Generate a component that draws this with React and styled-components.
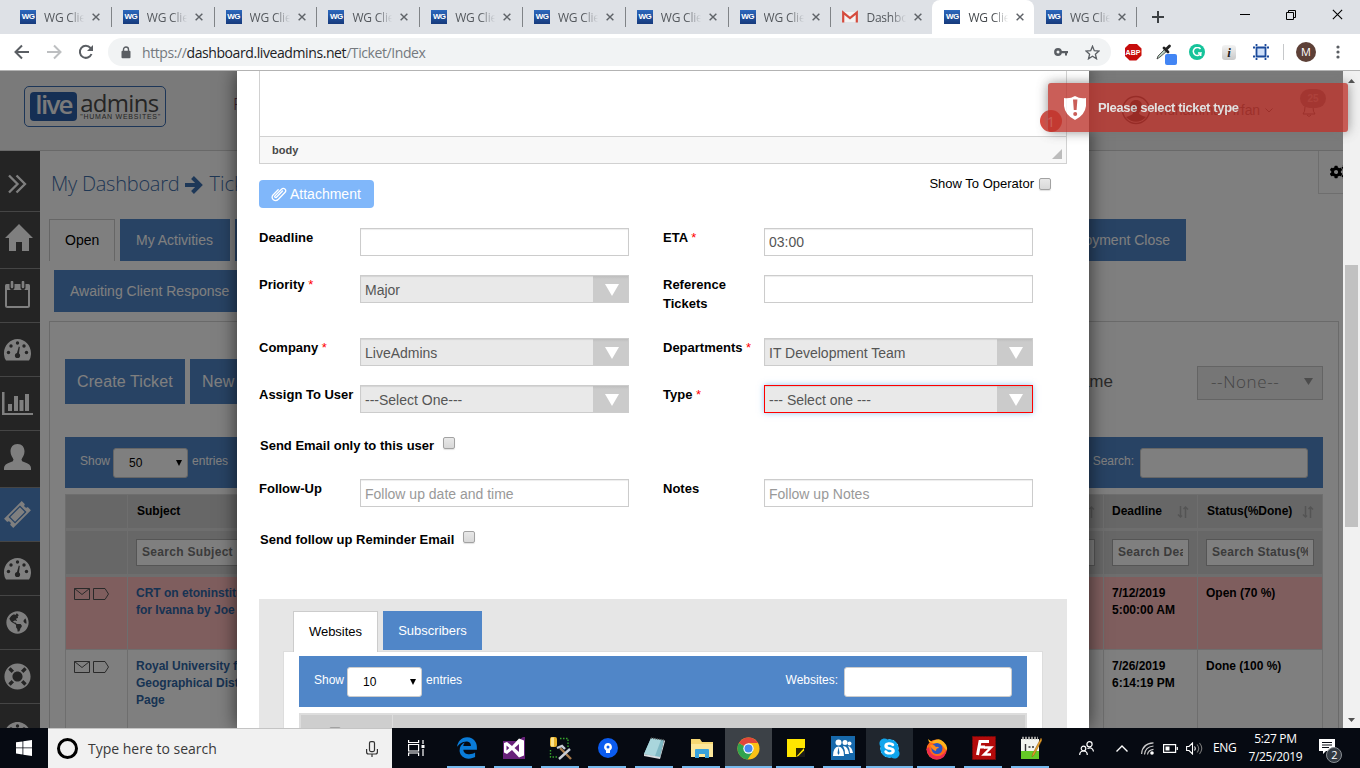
import React from "react";
import styled, { createGlobalStyle, css } from "styled-components";
import {
  FaCogs,
  FaGlobeAmericas,
  FaLifeRing,
  FaSkype,
} from "react-icons/fa";

const ui = `"Open Sans", "Noto Sans", sans-serif`;
const arial = `"Liberation Sans", Arial, sans-serif`;

const Global = createGlobalStyle`
  * { box-sizing: border-box; }
  html, body { margin: 0; padding: 0; overflow: hidden; }
  body { width: 1360px; height: 768px; font-family: ${arial}; color: #000; }
  svg { display: block; flex: none; }
`;

const Screen = styled.div`
  width: 1360px;
  height: 768px;
  display: flex;
  flex-direction: column;
  overflow: hidden;
`;

const Txt = styled.span`
  white-space: nowrap;
  letter-spacing: ${(p) => p.$ls || 0}px;
`;

/* ---------- browser chrome ---------- */

const TabStrip = styled.div`
  flex: none;
  height: 34px;
  background: #dee1e6;
  display: flex;
  padding-left: 8px;
`;

const BrowserTab = styled.div`
  width: ${(p) => (p.$active ? 101.6 : p.$w || 102.8)}px;
  height: 34px;
  display: flex;
  align-items: center;
  padding: 0 0 0 12px;
  font: 12px ${ui};
  color: #54585d;
  position: relative;
  ${(p) =>
    p.$active &&
    css`
      background: #fff;
      border-radius: 8px 8px 0 0;
      color: #45494d;
    `}
  ${(p) =>
    p.$line &&
    css`
      &::after {
        content: "";
        position: absolute;
        right: -1px;
        top: 7px;
        width: 1px;
        height: 20px;
        background: #808387;
      }
    `}
`;

const TabLabel = styled.span`
  width: 41px;
  margin-left: 8px;
  overflow: hidden;
  white-space: nowrap;
  letter-spacing: -0.2px;
  mask-image: linear-gradient(90deg, #000 60%, transparent 98%);
`;

const WgBadge = styled.span`
  width: 16px;
  height: 14px;
  background: linear-gradient(#2c68bd, #163a7c);
  color: #fff;
  font: bold 8px/13px ${arial};
  letter-spacing: -0.6px;
  text-align: center;
  flex: none;
`;

const TabClose = styled.span`
  margin-left: 7px;
  display: flex;
`;

const NewTab = styled.div`
  width: 44px;
  display: grid;
  place-items: center;
`;

const WindowButtons = styled.div`
  margin-left: auto;
  display: flex;
  height: 29px;
`;

const WindowButton = styled.div`
  width: 46px;
  display: grid;
  place-items: center;
`;

const Toolbar = styled.div`
  flex: none;
  height: 37px;
  background: #fff;
  border-bottom: 1px solid #b3b3b3;
  display: flex;
  align-items: center;
  padding-left: 14px;
`;

const NavButtons = styled.div`
  display: flex;
  gap: 16px;
  width: 94px;
`;

const AddressBar = styled.div`
  width: 1003px;
  height: 28px;
  border-radius: 14px;
  background: #f1f3f4;
  display: flex;
  align-items: center;
  padding: 0 11px 0 13px;
  font: 14px ${ui};
  color: #74797e;
`;

const Url = styled.span`
  margin-left: 11px;
  flex: 1;
  letter-spacing: -0.41px;
  b {
    font-weight: 400;
    color: #202124;
  }
`;

const AddressIcons = styled.div`
  display: flex;
  align-items: center;
  gap: 17px;
`;

const Extensions = styled.div`
  display: flex;
  align-items: center;
  margin-left: 6px;
`;

const ExtSlot = styled.div`
  width: 32px;
  height: 28px;
  display: grid;
  place-items: center;
`;

const AbpBadge = styled.div`
  width: 17px;
  height: 17px;
  background: #c70d0c;
  clip-path: polygon(30% 0, 70% 0, 100% 30%, 100% 70%, 70% 100%, 30% 100%, 0 70%, 0 30%);
  color: #fff;
  font: bold 7px/17px ${arial};
  text-align: center;
`;

const GrammarBadge = styled.div`
  width: 16px;
  height: 16px;
  border-radius: 50%;
  background: #15c39a;
  display: grid;
  place-items: center;
`;

const InfoBadge = styled.div`
  width: 14px;
  height: 15px;
  border-radius: 3px;
  background: linear-gradient(#f3f3f3, #c9c9c9);
  color: #222;
  font: italic bold 13px/15px "Liberation Serif", serif;
  text-align: center;
`;

const ToolbarDivider = styled.div`
  width: 1px;
  height: 16px;
  background: #c6c8ca;
  margin-left: 6px;
`;

const Profile = styled.div`
  width: 20px;
  height: 20px;
  border-radius: 50%;
  background: #5d4037;
  color: #fff;
  font: 11px/20px ${ui};
  text-align: center;
  margin: 0 20px 0 12px;
`;

/* ---------- page behind the dialog ---------- */

const Viewport = styled.div`
  flex: none;
  height: 657px;
  display: flex;
`;

const PageArea = styled.div`
  width: 1343px;
  position: relative;
`;

const Page = styled.div`
  height: 100%;
  background: #fff;
  display: flex;
  flex-direction: column;
  overflow: hidden;
`;

const SiteHeader = styled.header`
  flex: none;
  height: 80px;
  background: #f4f4f4;
  border-bottom: 1px solid #d2d2d2;
  display: flex;
  padding-left: 24px;
`;

const Logo = styled.div`
  width: 142px;
  height: 41px;
  margin-top: 15px;
  border: 1px solid #3a6cb0;
  border-radius: 5px;
  display: flex;
  padding: 5px 4px 5px 5px;
`;

const LogoLive = styled.div`
  width: 49px;
  height: 29px;
  border-radius: 4px;
  background: #2b5fa8;
  color: #f4f4f4;
  font: 600 26px/25px ${ui};
  letter-spacing: -1.7px;
  text-align: center;
`;

const LogoWords = styled.div`
  margin-left: 3px;
  display: flex;
  flex-direction: column;
  color: #4a4a4a;
  font: 24px/21px ${ui};
  letter-spacing: -0.7px;
  white-space: nowrap;
  small {
    font: 7px/8px ${arial};
    letter-spacing: 0.75px;
  }
`;

const HeaderLink = styled.div`
  margin: 22px 0 0 67px;
  font: 300 17px/22px ${ui};
  color: #7a3a5a;
`;

const HeaderUser = styled.div`
  margin: 24px 0 0 auto;
  height: 30px;
  display: flex;
  align-items: center;
  font-size: 14px;
  color: #333;
  gap: 5px;
`;

const Notices = styled.div`
  width: 36px;
  margin: 18px 13px 0 21px;
  position: relative;
  display: flex;
  justify-content: center;
  svg {
    margin-top: 9px;
    margin-right: 7px;
  }
`;

const NoticeCount = styled.span`
  position: absolute;
  left: 6px;
  top: 0;
  width: 26px;
  height: 19px;
  border-radius: 10px;
  background: #777;
  color: #ddd;
  font: bold 10px/19px ${arial};
  text-align: center;
`;

const PageBody = styled.div`
  flex: 1;
  min-height: 0;
  display: flex;
`;

const Sidebar = styled.nav`
  width: 40px;
  flex: none;
  background: #484848;
  overflow: hidden;
`;

const SideItem = styled.div`
  height: ${(p) => p.$h}px;
  border-bottom: 1px solid #8b8b8b;
  background: ${(p) => (p.$active ? "#5086c8" : "#484848")};
  color: #fff;
  display: flex;
  align-items: center;
  padding: ${(p) => Math.max(0, -p.$up)}px 0 ${(p) => Math.max(0, p.$up)}px ${(p) => p.$x}px;
`;

const Main = styled.main`
  flex: 1;
  min-width: 0;
  display: flex;
  flex-direction: column;
`;

const TitleRow = styled.div`
  height: 68px;
  flex: none;
  display: flex;
  padding-left: 11px;
  font: 300 20px/66px ${ui};
  color: #3f6ea9;
  svg {
    margin: 25px 6px 0 6px;
  }
`;

const Settings = styled.div`
  margin-left: auto;
  width: 25px;
  height: 43px;
  border-left: 1px solid #ddd;
  border-bottom: 1px solid #ddd;
  overflow: hidden;
  color: #000;
  svg {
    margin: 12px 0 0 11px;
  }
`;

const PageTabs = styled.div`
  flex: none;
  display: flex;
  gap: 5px;
  height: 42px;
  margin-top: ${(p) => p.$mt || 0}px;
  padding: 0 157px 0 ${(p) => p.$pl}px;
`;

const PageTab = styled.div`
  background: #5086c8;
  color: #fff;
  font-size: 14px;
  line-height: 42px;
  width: ${(p) => p.$w || "auto"};
  flex: ${(p) => (p.$fill ? 1 : "none")};
  padding: 0 16px;
  white-space: nowrap;
  ${(p) =>
    p.$active &&
    css`
      background: #fff;
      color: #000;
      border: 1px solid #ccc;
      border-bottom: 0;
      padding: 0 15px;
      line-height: 40px;
    `}
`;

const Panel = styled.section`
  flex: 1;
  width: 1290px;
  margin: 9px 0 0 9px;
  border: 1px solid #d4d4d4;
  border-bottom: 0;
  padding: 37px 15px 0;
`;

const Actions = styled.div`
  display: flex;
  height: 45px;
  gap: 5px;
  margin-bottom: 33px;
`;

const ActionButton = styled.div`
  width: ${(p) => p.$w}px;
  background: #5086c8;
  color: #fff;
  font-size: 16px;
  letter-spacing: 0.12px;
  line-height: 45px;
  padding-left: 12px;
  white-space: nowrap;
`;

const FilterLabel = styled.div`
  margin-left: auto;
  font-size: 17px;
  line-height: 45px;
  color: #555;
  width: 129px;
  text-align: right;
  padding-right: 0;
`;

const NoneSelect = styled.div`
  width: 126px;
  height: 34px;
  margin: 7px 0 0 79px;
  border: 1px solid #c8c8c8;
  background: #ececec;
  color: #8a8a8a;
  font: 300 17px/30px ${ui};
  display: flex;
  justify-content: space-between;
  padding: 0 9px 0 13px;
  svg {
    margin-top: 11px;
  }
`;

const ListBar = styled.div`
  height: 51px;
  background: #5086c8;
  color: #fff;
  font: 12px ${arial};
  display: flex;
  align-items: center;
  padding: 0 15px;
`;

const BarText = styled.span`
  padding-bottom: 3px;
  margin-left: ${(p) => (p.$push ? "auto" : 0)};
`;

const CountSelect = styled.div`
  width: 75px;
  height: 30px;
  border: 1px solid #ccc;
  border-radius: 3px;
  background: #fff;
  color: #000;
  font: 12px/30px ${arial};
  display: flex;
  align-items: center;
  justify-content: space-between;
  padding: 0 5px 0 15px;
  margin: 0 4px 0 ${(p) => p.$ml}px;
`;

const BarSearch = styled.input`
  width: 168px;
  height: 30px;
  border: 1px solid #ccc;
  border-radius: 3px;
  background: #fff;
  margin-left: 6px;
  outline: 0;
  padding: 0 6px;
`;

const Grid = styled.div`
  margin-top: 6px;
  border: 1px solid #ddd;
  border-bottom: 0;
`;

const GridRow = styled.div`
  display: grid;
  grid-template-columns: 62px 1fr 110px 94px 124px;
  height: ${(p) => p.$h}px;
  background: ${(p) => p.$bg || "#fff"};
  border-bottom: ${(p) => p.$bb || 1}px solid #ddd;
`;

const Cell = styled.div`
  border-right: 1px solid #ddd;
  &:last-child {
    border-right: 0;
  }
  padding: ${(p) => p.$p || "8px 8px 6px"};
  font: bold 12px/17px ${arial};
  color: ${(p) => p.$color || "#000"};
  white-space: nowrap;
  overflow: hidden;
  display: ${(p) => (p.$flex ? "flex" : "block")};
  justify-content: space-between;
  align-items: center;
`;

const MailIcons = styled.div`
  display: flex;
  gap: 3px;
  padding-top: 3px;
`;

const CellSearch = styled.div`
  width: ${(p) => p.$w}px;
  height: 27px;
  border: 1px solid #aaa;
  background: #fff;
  padding: 0 5px;
  color: #777;
  font: bold 12px/25px ${arial};
  overflow: hidden;
  white-space: nowrap;
  span {
    display: block;
    overflow: hidden;
    letter-spacing: 0.3px;
  }
`;

const Backdrop = styled.div`
  position: absolute;
  inset: 0;
  background: rgba(0, 0, 0, 0.5);
`;

/* ---------- dialog ---------- */

const DialogLayer = styled.div`
  position: absolute;
  inset: 0;
  overflow: hidden;
  padding-left: 237px;
`;

const Dialog = styled.div`
  width: 852px;
  height: 100%;
  background: #fff;
  box-shadow: 0 0 18px rgba(0, 0, 0, 0.62);
  padding: 0 22px;
  display: flex;
  flex-direction: column;
`;

const Editor = styled.div`
  flex: none;
  height: 93px;
  border: 1px solid #d1d1d1;
  border-top: 0;
  display: flex;
  flex-direction: column;
  justify-content: flex-end;
`;

const EditorPath = styled.div`
  height: 27px;
  border-top: 1px solid #d1d1d1;
  background: #f8f8f8;
  color: #484848;
  font: bold 11px/26px ${arial};
  padding: 0 4px 0 12px;
  display: flex;
  justify-content: space-between;
  svg {
    margin-top: 12px;
  }
`;

const AttachRow = styled.div`
  flex: none;
  height: 64px;
  display: flex;
  justify-content: space-between;
  padding-top: 16px;
`;

const AttachButton = styled.div`
  width: 115px;
  height: 28px;
  border-radius: 4px;
  background: #80b7fa;
  color: #fff;
  font-size: 14px;
  display: flex;
  align-items: center;
  padding-left: 12px;
  gap: 3px;
`;

const CheckLine = styled.label`
  display: flex;
  font: ${(p) => (p.$bold ? "bold" : "normal")} 13px/15px ${arial};
  height: ${(p) => (p.$h ? p.$h + "px" : "auto")};
  padding: ${(p) => p.$p};
  flex: none;
`;

const OperatorText = styled.span`
  margin-top: -4px;
`;

const Check = styled.span`
  display: block;
  width: 12px;
  height: 12px;
  border: 1px solid #a2a2a2;
  border-radius: 2px;
  background: linear-gradient(#e8e8e8, #d8d8d8);
  margin: ${(p) => p.$m};
  box-shadow: 0 1px 1px rgba(0, 0, 0, 0.12);
`;

const FormRow = styled.div`
  flex: none;
  display: flex;
  height: ${(p) => p.$h}px;
`;

const Label = styled.div`
  width: 101px;
  font: bold 13px/19px ${arial};
  white-space: pre-line;
  i {
    color: #f00;
    font-style: normal;
    font-weight: 400;
  }
`;

const Input = styled.input`
  width: 269px;
  height: 28px;
  border: 1px solid #ccc;
  box-shadow: inset 0 1px 1px rgba(0, 0, 0, 0.075);
  font: 14px ${arial};
  color: #555;
  padding: ${(p) => (p.value ? "0 4px 1px" : "1px 4px 0")};
  margin-right: 34px;
  outline: 0;
  &::placeholder {
    color: #999;
    opacity: 1;
  }
`;

const Select = styled.div`
  width: 269px;
  height: 28px;
  border: 1px solid ${(p) => (p.$error ? "#f00" : "#ccc")};
  background: #e9e9e9;
  box-shadow: inset 0 1px 1px rgba(0, 0, 0, 0.09)
    ${(p) => (p.$error ? ", 0 0 6px rgba(102,175,233,.7)" : "")};
  font: 14px/28px ${arial};
  color: #555;
  padding-left: 4px;
  margin-right: 34px;
  display: flex;
  justify-content: space-between;
`;

const SelectArrow = styled.span`
  width: 35px;
  background: linear-gradient(#bebebe, #cbcbcb 3px);
  display: grid;
  place-items: center;
  padding: 2px 0 0 2px;
`;

const LinkedPanel = styled.div`
  flex: 1;
  min-height: 0;
  overflow: hidden;
  background: #e6e6e6;
  padding: 12px 24px 0;
`;

const LinkedTabs = styled.div`
  display: flex;
  gap: 5px;
  padding-left: 10px;
  height: 40px;
`;

const LinkedTab = styled.div`
  position: relative;
  width: ${(p) => p.$w}px;
  height: ${(p) => (p.$active ? 41 : 39)}px;
  text-align: center;
  font-size: 13px;
  line-height: 39px;
  background: ${(p) => (p.$active ? "#fff" : "#5086c8")};
  color: ${(p) => (p.$active ? "#000" : "#fff")};
  border: ${(p) => (p.$active ? "1px solid #ccc" : "0")};
  border-bottom: 0;
`;

const LinkedBody = styled.div`
  border: 1px solid #ddd;
  border-bottom: 0;
  background: #fff;
  width: 760px;
  height: 120px;
  padding: 4px 15px 0;
`;

const LinkedTable = styled.div`
  margin-top: 6px;
  border: 2px solid #ddd;
  height: 40px;
  display: flex;
  background: #cecece;
`;

const LinkedCheckCell = styled.div`
  width: 92px;
  border-right: 1px solid #ddd;
  padding: 12px 0 0 28px;
`;

/* ---------- toast ---------- */

const StepBadge = styled.div`
  position: absolute;
  left: 1040px;
  top: 39px;
  width: 22px;
  height: 22px;
  border-radius: 50%;
  background: #e0483d;
  color: #fff;
  font: 14px/23px ${ui};
  text-align: center;
`;

const Toast = styled.div`
  position: absolute;
  left: 1048px;
  top: 12px;
  width: 300px;
  height: 49px;
  z-index: 3;
  border-radius: 3px;
  background: #bd362f;
  opacity: 0.8;
  box-shadow: 0 0 12px #777;
  color: #fff;
  font: bold 13px ${arial};
  display: flex;
  align-items: center;
  gap: 12px;
  padding-left: 16px;
`;

const Scrollbar = styled.div`
  width: 17px;
  background: #f1f1f1;
  display: flex;
  flex-direction: column;
  align-items: center;
  padding: 8px 0 6px;
`;

const Thumb = styled.div`
  width: 13px;
  height: 262px;
  background: #c1c1c1;
  margin: 182px 0 auto;
`;

/* ---------- taskbar ---------- */

const Taskbar = styled.footer`
  flex: none;
  height: 40px;
  background: #060a12;
  display: flex;
  color: #fff;
`;

const StartButton = styled.div`
  width: 48px;
  display: grid;
  place-items: center;
`;

const TaskSearch = styled.div`
  width: 344px;
  background: #f1f1f1;
  border-top: 1px solid #c4c4c4;
  display: flex;
  align-items: center;
  color: #3a3a3a;
  font: 14px ${ui};
  padding: 0 14px 0 9px;
  span {
    flex: 1;
    margin-left: 10px;
  }
`;

const CortanaRing = styled.div`
  width: 21px;
  height: 21px;
  border: 3px solid #000;
  border-radius: 50%;
`;

const TaskView = styled.div`
  width: 51px;
  display: grid;
  place-items: center;
  padding-right: 3px;
`;

const AppSlot = styled.div`
  width: 47px;
  display: grid;
  place-items: center;
  background: ${(p) => (p.$on ? p.$on : "none")};
  position: relative;
  &::after {
    content: "";
    position: absolute;
    left: ${(p) => (p.$on ? 0 : 4)}px;
    right: ${(p) => (p.$on ? 0 : 5)}px;
    bottom: 0;
    height: 2px;
    background: #76b9ed;
  }
`;

const Tray = styled.div`
  margin-left: auto;
  display: flex;
  align-items: center;
  font: 12px/18px ${ui};
  width: 281px;
`;

const TrayIcon = styled.span`
  margin-left: ${(p) => p.$ml}px;
`;

const Clock = styled.div`
  width: 58px;
  text-align: center;
  letter-spacing: -0.35px;
  margin: 0 15px 0 10px;
  white-space: nowrap;
`;

const ActionCenter = styled.div`
  width: 26px;
  height: 30px;
  position: relative;
  svg {
    margin-top: 6px;
  }
`;

const ActionCount = styled.span`
  position: absolute;
  left: 7px;
  top: 14px;
  width: 16px;
  height: 16px;
  border-radius: 50%;
  background: #333a42;
  border: 1px solid #8a8f94;
  font: 11px/14px ${ui};
  text-align: center;
`;

/* ---------- small drawings ---------- */

const Tri = ({ w, h, c, up }) => (
  <svg width={w} height={h} viewBox="0 0 10 10" preserveAspectRatio="none">
    <path d={up ? "M0 10L5 0L10 10Z" : "M0 0H10L5 10Z"} fill={c} />
  </svg>
);

const Cross = ({ s = 8, c = "#5f6368", w = 1.8 }) => (
  <svg width={s} height={s} viewBox="0 0 10 10">
    <path d="M.8 .8L9.2 9.2M9.2 .8L.8 9.2" stroke={c} strokeWidth={w} />
  </svg>
);

const Gmail = () => (
  <svg width="16" height="16" viewBox="0 0 16 16">
    <path d="M2 3h12v10H2z" fill="#f2f2f2" />
    <path d="M1.200 13.500V3.600L8 9l6.800-5.400v9.900" fill="none" stroke="#d54b3d" strokeWidth="2.200" />
  </svg>
);

const ThickArrow = () => (
  <svg width="18" height="18" viewBox="0 0 18 18" fill="none" stroke="#3d70b0">
    <path d="M0 9H13" strokeWidth="4" />
    <path d="M7.500 1.500L15 9L7.500 16.500" strokeWidth="4" />
  </svg>
);

const Gauge = () => (
  <svg width="27" height="22" viewBox="0 0 27 22">
    <path d="M2 21.5A13 13 0 0 1 0 14C0 6.5 6 0 13.5 0S27 6.500 27 14a13 13 0 0 1-2 7.500z" fill="#fff" />
    <g fill="#484848">
      <circle cx="4.500" cy="13.500" r="1.700" />
      <circle cx="7" cy="7" r="1.700" />
      <circle cx="13.500" cy="4" r="1.700" />
      <circle cx="20" cy="7" r="1.700" />
      <circle cx="22.500" cy="13.500" r="1.700" />
      <circle cx="13.500" cy="16.500" r="2.600" />
      <path d="M12.400 16L14.800 7.500L15.800 8L14.800 16Z" />
    </g>
  </svg>
);

const Sort = () => (
  <svg width="12" height="12" viewBox="0 0 12 12" fill="none" stroke="#a9a9a9" strokeWidth="1.500">
    <path d="M3.500 0V11M1 8.500L3.500 11L5 9.500M8.500 12V1M6.500 3L8.500 1L11 3.500" />
  </svg>
);

const Mail = () => (
  <>
    <svg width="16" height="12" viewBox="0 0 16 12" fill="none" stroke="#555">
      <path d="M.5 .5h15v11H.5zM.5 .5L8 6.500L15.500 .5" />
    </svg>
    <svg width="16" height="12" viewBox="0 0 16 12" fill="none" stroke="#555">
      <path d="M.5 .5h11.500L15.500 6L12 11.500H.5z" />
    </svg>
  </>
);

const Clip = () => (
  <svg width="16" height="15" viewBox="0 0 16 15" fill="none" stroke="#fff" strokeWidth="1.300" strokeLinecap="round">
    <path d="M11.500 4L5.500 10.200c-1 1-2.400-.2-1.500-1.300L10.500 2.300c2.300-2.200 5.500.6 3.600 3L7.400 12.300C4 15.600-.9 11.400 2 8L7.200 2.700" />
  </svg>
);

const Shield = () => (
  <svg width="22" height="24" viewBox="0 0 22 24">
    <path d="M0 2Q6 3 11 0Q16 3 22 2V10Q21 19 11 24Q1 19 0 10Z" fill="#fff" />
    <path d="M9 3.500h4.400l-.8 10.500h-2.800zM11.200 16a2 2 0 1 1 0 4a2 2 0 0 1 0-4z" fill="#bd362f" />
  </svg>
);

const Edge = () => (
  <svg width="22" height="22" viewBox="0 0 512 512" fill="#0a7cd8">
    <path d="M486.286 243.671c0-44.032-7.754-84.465-28.801-122.405C416.498 47.879 343.912 8.001 258.893 8.001 118.962 7.724 40.617 113.214 26.056 227.679c42.429-61.312 117.073-121.376 220.375-124.966 0 0 109.666 0 99.419 104.957H169.997c6.369-37.386 18.554-58.986 34.339-78.926-75.048 34.893-121.850 96.096-120.742 188.315.83 71.448 50.124 144.836 120.743 171.976 83.357 31.847 192.776 7.200 240.132-21.324V363.307c-80.864 56.494-270.871 60.925-272.255-67.572h314.073v-52.064z" />
  </svg>
);

const AppIcons = [
  <Edge />,
  <svg width="22" height="22" viewBox="0 0 22 22">
    <path d="M0 4H14L20 0H22V22H0z" fill="#68217a" />
    <path d="M1 6L4 5L9 9L16 1.500L21 3.500V18.500L16 20.500L9 13L4 17L1 15.500zM3.500 8.500v5L6.300 11zM16 7l-4.500 4L16 15z" fill="#fff" fillRule="evenodd" />
  </svg>,
  <svg width="24" height="24" viewBox="0 0 24 24">
    <path d="M11 2.500h8v9M1.500 14v7h8" fill="none" stroke="#37a32c" strokeWidth="1.400" strokeDasharray="1.500 1.500" />
    <rect x="1" y="1" width="7" height="10" rx="2" fill="#e9b32c" />
    <rect x="2" y="1.500" width="3" height="9" fill="#fbe38d" />
    <path d="M11 12l11 11" stroke="#a97b4b" strokeWidth="2.400" />
    <path d="M21 13L10 23M8 12l5-2 3 3" stroke="#c9ced6" strokeWidth="2.400" fill="none" />
  </svg>,
  <svg width="20" height="20" viewBox="0 0 20 20">
    <circle cx="10" cy="10" r="10" fill="#0b5cf0" />
    <path d="M10 5a4 4 0 0 0-2 7.400V15h4v-2.600A4 4 0 0 0 10 5z" fill="#fff" />
    <circle cx="10" cy="9" r="1.500" fill="#0b5cf0" />
  </svg>,
  <svg width="23" height="22" viewBox="0 0 23 22">
    <path d="M8 1L21 3L17 21L1 17z" fill="#7fb9c4" />
    <path d="M8 1L18 3L12 19L1 17z" fill="#a9d6dc" />
    <path d="M1 17l16 3v2L1 19zM21 3l1 1-5 18v-2z" fill="#d9dde0" />
    <path d="M8 1l13 2" stroke="#555" strokeWidth="1.500" strokeDasharray="1 1" />
  </svg>,
  <svg width="22" height="19" viewBox="0 0 22 19">
    <path d="M0 0h9l2 3H22V18H0z" fill="#f6d773" />
    <path d="M0 5h22v13H0z" fill="#fce79a" />
    <path d="M4 19v-8q0-1 1-1h12q1 0 1 1v8h-4v-4H8v4z" fill="#39a3dc" />
  </svg>,
  <svg width="23" height="23" viewBox="0 0 24 24">
    <circle cx="12" cy="12" r="11.500" fill="#fbc116" />
    <path d="M2 6.300A11.500 11.500 0 0 0 11 23.500L17 14.500L12 12z" fill="#30a350" />
    <path d="M12 12L2 6.300A11.500 11.500 0 0 1 22 6.300H12z" fill="#e2463a" />
    <circle cx="12" cy="12" r="5.400" fill="#fff" />
    <circle cx="12" cy="12" r="4.200" fill="#4688f1" />
  </svg>,
  <svg width="18" height="18" viewBox="0 0 18 18">
    <path d="M0 0H18V18H0z" fill="#ffe600" />
    <path d="M9 9h9v9H9z" fill="#1a1a1a" />
    <path d="M10 10h7l-7 7z" fill="#ffe600" />
    <path d="M9 9h9L9 18z" fill="#2a2600" />
    <path d="M11.500 17L17 11.500V9L9 18z" fill="#ffe600" />
  </svg>,
  <svg width="24" height="24" viewBox="0 0 24 24">
    <path d="M0 0h24v24H0z" fill="#1769ab" />
    <g fill="#fff">
      <circle cx="7.500" cy="6.500" r="3" />
      <circle cx="14" cy="6.500" r="2.500" />
      <circle cx="18.500" cy="7.500" r="2" />
      <path d="M2 20Q2 11 7.500 10.500Q13 11 13 20zM12 10q5 0 6 8h-4Q14 13 12 10zM17 10q4 1 5 7h-3Q18.500 12 17 10z" />
    </g>
    <path d="M7.500 11l1 6l-1 2l-1-2z" fill="#1769ab" />
  </svg>,
  <FaSkype size={23} color="#10a5ec" style={{ background: "radial-gradient(#fff 55%, transparent 56%)" }} />,
  <svg width="23" height="23" viewBox="0 0 23 23">
    <circle cx="11.500" cy="12.500" r="10" fill="#ff6a1a" />
    <path d="M4 5L3 2L7 5Q12 1 16 3Q23 7 22 14L17 8z" fill="#ffb51b" />
    <path d="M1.500 12Q3 22 12 22.500Q21 22 22 12Q18 20 11 19Q5 18 4 10z" fill="#ec2a50" />
    <circle cx="12" cy="11.500" r="5.500" fill="#2b55c0" />
    <path d="M5 8Q9 7 11 10Q13 9 14 11Q11 11 11 14Q7 13 5 8z" fill="#ff8c1a" />
  </svg>,
  <svg width="24" height="24" viewBox="0 0 24 24">
    <path d="M.5 .5h23v23H.5z" fill="#b30b0b" stroke="#7a0707" strokeDasharray="2 1" />
    <path d="M5.500 19L8 5.500H17M7 11h6" fill="none" stroke="#fff" strokeWidth="3" />
    <path d="M12 11.500h7L12 18.500h7" fill="none" stroke="#fff" strokeWidth="2.400" />
  </svg>,
  <svg width="22" height="24" viewBox="0 0 22 24">
    <path d="M1 3h18v20H1z" fill="#f3f5ef" />
    <path d="M1 15h18v8H1z" fill="#65c926" />
    <path d="M2 2h16" stroke="#999" strokeWidth="2.400" strokeDasharray="2 1" />
    <path d="M5.500 8v7M8.500 11h2M12 11h2" stroke="#333" strokeWidth="1.400" />
    <path d="M21 2L12.500 18l-.5 3l2-2L22 4z" fill="#e8a128" stroke="#8b5b1a" strokeWidth=".5" />
  </svg>,
];

const SideIcons = [
  [61, 8, -5, false, (
    <svg width="19" height="20" viewBox="0 0 19 20" fill="none" stroke="#fff" strokeWidth="2.300">
      <path d="M1 1.500L9.500 10L1 18.500M8.500 1.500L17 10L8.500 18.500" />
    </svg>
  )],
  [57, 5, 5, false, (
    <svg width="28" height="27" viewBox="0 0 28 27" fill="#fff">
      <path d="M14 0L28 14H24V27H17V18H11V27H4V14H0z" />
    </svg>
  )],
  [54, 5, 3, false, (
    <svg width="25" height="27" viewBox="0 0 25 27">
      <rect x="1" y="5" width="23" height="21" rx="1.500" fill="none" stroke="#fff" strokeWidth="2" />
      <path d="M0 4.500q0-1.500 1.500-1.500h22q1.500 0 1.500 1.500V9H0z" fill="#fff" />
      <path d="M7 0v6.500M18 0v6.500" stroke="#484848" strokeWidth="5" strokeLinecap="round" />
      <path d="M7 1v5M18 1v5" stroke="#fff" strokeWidth="2.600" strokeLinecap="round" />
    </svg>
  )],
  [54, 4, 0, false, <Gauge />],
  [54, 2, 1, false, (
    <svg width="31" height="23" viewBox="0 0 31 23" fill="#fff">
      <path d="M0 0h2.500v21H31v2H0zM6 12h4v7H6zM12 4h4v15h-4zM17.500 8h4v11h-4zM23 2h4v17h-4z" />
    </svg>
  )],
  [57, 4, 4, false, (
    <svg width="27" height="26" viewBox="0 0 27 26" fill="#fff">
      <path d="M13.500 0C18 0 20.500 3 20.500 7.500C20.500 11 18.500 13 17.500 15.500Q17.500 17.500 20 18Q27 20 27 24V26H0V24Q0 20 7 18Q9.500 17.500 9.500 15.500C8.500 13 6.500 11 6.500 7.500C6.500 3 9 0 13.500 0z" />
    </svg>
  )],
  [54, 4, 1, true, (
    <svg width="27" height="27" viewBox="0 0 27 27">
      <g transform="rotate(-45 13.500 13.500)">
        <path d="M1 7H26V11.500a2 2 0 0 0 0 4V20H1V15.500a2 2 0 0 0 0-4z" fill="#fff" />
        <path d="M6 9.500h15v8H6z" fill="none" stroke="#5086c8" strokeWidth="1.300" />
      </g>
    </svg>
  )],
  [54, 4, 0, false, <Gauge />],
  [54, 6, 1, false, <FaGlobeAmericas size={23} />],
  [54, 4, 0, false, <FaLifeRing size={27} />],
  [54, 4, -4, false, <Gauge />],
];

const tabs = ["WG Clie", "WG Clie", "WG Clie", "WG Clie", "WG Clie", "WG Clie", "WG Clie", "WG Clie", "Dashboard", "WG Clie", "WG Clie"];

const Star = ({ children }) => (
  <Label>
    {children} <i>*</i>
  </Label>
);

const Dropdown = ({ children, error }) => (
  <Select $error={error}>
    <span>{children}</span>
    <SelectArrow>
      <Tri w={14} h={12} c="#fff" />
    </SelectArrow>
  </Select>
);

export default function App() {
  return (
    <Screen>
      <Global />
      <TabStrip>
        {tabs.map((t, i) => (
          <BrowserTab key={i} $active={i === 9} $w={i === 8 ? 102 : i === 10 ? 101.6 : 0} $line={i !== 8 && i !== 9}>
            {i === 8 ? <Gmail /> : <WgBadge>WG</WgBadge>}
            <TabLabel>{t}</TabLabel>
            <TabClose><Cross /></TabClose>
          </BrowserTab>
        ))}
        <NewTab>
          <svg width="12" height="12" viewBox="0 0 12 12" stroke="#3c4043" strokeWidth="2">
            <path d="M6 0V12M0 6H12" />
          </svg>
        </NewTab>
        <WindowButtons>
          <WindowButton>
            <svg width="10" height="1" viewBox="0 0 10 1"><path d="M0 0h10v1H0z" /></svg>
          </WindowButton>
          <WindowButton>
            <svg width="10" height="10" viewBox="0 0 10 10" fill="none" stroke="#000">
              <path d="M.5 2.500h7v7h-7zM2.500 2.500v-2h7v7h-2" />
            </svg>
          </WindowButton>
          <WindowButton><Cross s={11} c="#000" w={1} /></WindowButton>
        </WindowButtons>
      </TabStrip>

      <Toolbar>
        <NavButtons>
          {["#5a5e63", "#bdbfc1"].map((c, i) => (
            <svg key={c} width="16" height="16" viewBox="0 0 16 16" fill="none" stroke={c} strokeWidth="2" transform={i ? "rotate(180)" : undefined}>
              <path d="M15 8H2M8 1.500L1.500 8L8 14.500" />
            </svg>
          ))}
          <svg width="16" height="16" viewBox="0 0 16 16" fill="none" stroke="#5a5e63" strokeWidth="2">
            <path d="M13.500 10A6 6 0 1 1 12.500 4L14 5.500" />
            <path d="M15 1V7H9z" fill="#5a5e63" stroke="none" />
          </svg>
        </NavButtons>
        <AddressBar>
          <svg width="10" height="13" viewBox="0 0 10 13">
            <path d="M2.500 5V3.500a2.500 2.500 0 0 1 5 0V5" fill="none" stroke="#5a5e63" strokeWidth="1.400" />
            <rect x=".5" y="4.700" width="9" height="7.500" rx="1" fill="#5a5e63" />
          </svg>
          <Url>https://<b>dashboard.liveadmins.net</b>/Ticket/Index</Url>
          <AddressIcons>
            <svg width="14" height="8" viewBox="0 0 14 8">
              <circle cx="4" cy="4" r="2.700" fill="none" stroke="#5a5e63" strokeWidth="2.400" />
              <path d="M6.500 3H14v2.300h-1V7.500h-2V5.300H6.500z" fill="#5a5e63" />
            </svg>
            <svg width="15" height="15" viewBox="0 0 15 15" fill="none" stroke="#5a5e63" strokeWidth="1.300">
              <path d="M7.500 1.200L9.300 5.700L14 6.100L10.400 9.200L11.500 13.800L7.500 11.300L3.500 13.800L4.600 9.200L1 6.100L5.700 5.700z" />
            </svg>
          </AddressIcons>
        </AddressBar>
        <Extensions>
          <ExtSlot><AbpBadge>ABP</AbpBadge></ExtSlot>
          <ExtSlot>
            <svg width="24" height="26" viewBox="0 0 24 26">
              <path d="M4 20L5 17L12 10L14 12L7 18z" fill="#b9d2c2" stroke="#333" strokeWidth=".8" />
              <path d="M11 9l4 4M12.500 11L16.500 7" stroke="#222" strokeWidth="2.800" strokeLinecap="round" />
              <rect x="12" y="15" width="12" height="11" rx="2" fill="#4285f4" />
            </svg>
          </ExtSlot>
          <ExtSlot>
            <GrammarBadge>
              <svg width="10" height="10" viewBox="0 0 10 10" fill="none" stroke="#fff" strokeWidth="1.500">
                <path d="M8.500 2A4 4 0 1 0 9 6H6M8.700 5.500V9" />
              </svg>
            </GrammarBadge>
          </ExtSlot>
          <ExtSlot><InfoBadge>i</InfoBadge></ExtSlot>
          <ExtSlot>
            <svg width="16" height="16" viewBox="0 0 16 16" fill="none" stroke="#1b4a9b" strokeWidth="1.800">
              <path d="M3.500 3.500h9v9h-9z" fill="#cfe0fa" />
              <path d="M3.500 0v2M12.500 0v2M3.500 14v2M12.500 14v2M0 3.500h2M0 12.500h2M14 3.500h2M14 12.500h2" />
            </svg>
          </ExtSlot>
        </Extensions>
        <ToolbarDivider />
        <Profile>M</Profile>
        <svg width="4" height="14" viewBox="0 0 4 14" fill="#5a5e63">
          <circle cx="2" cy="2" r="1.600" /><circle cx="2" cy="7" r="1.600" /><circle cx="2" cy="12" r="1.600" />
        </svg>
      </Toolbar>

      <Viewport>
        <PageArea>
          <Page>
            <SiteHeader>
              <Logo>
                <LogoLive>live</LogoLive>
                <LogoWords>admins<small>"HUMAN WEBSITES"</small></LogoWords>
              </Logo>
              <HeaderLink>F</HeaderLink>
              <HeaderUser>
                <svg width="30" height="30" viewBox="0 0 30 30">
                  <circle cx="15" cy="15" r="13.500" fill="none" stroke="#111" strokeWidth="1.500" />
                  <path d="M15 5c4 0 6 2.500 6 6s-2 5-3 7q0 2 7 4a13 13 0 0 1-20 0q7-2 7-4c-1-2-3-3.500-3-7s2-6 6-6z" fill="#000" />
                </svg>
                <Txt $ls={-0.1}>Muhammad Irfan</Txt>
                <svg width="8" height="5" viewBox="0 0 8 5" fill="none" stroke="#333"><path d="M.5 .5L4 4L7.500 .5" /></svg>
              </HeaderUser>
              <Notices>
                <svg width="14" height="20" viewBox="0 0 14 20" fill="none" stroke="#333">
                  <path d="M1 16Q3 14 3 9Q3 5 7 5T11 9Q11 14 13 16zM5 17q2 3 4 0" />
                </svg>
                <NoticeCount>25</NoticeCount>
              </Notices>
            </SiteHeader>
            <PageBody>
              <Sidebar>
                {SideIcons.map(([h, x, up, active, icon], i) => (
                  <SideItem key={i} $h={h} $x={x} $up={up} $active={active}>{icon}</SideItem>
                ))}
              </Sidebar>
              <Main>
                <TitleRow>
                  <Txt $ls={-0.25}>My Dashboard</Txt>
                  <ThickArrow />
                  <Txt>Tickets</Txt>
                  <Settings><FaCogs size={18} /></Settings>
                </TitleRow>
                <PageTabs $pl={9}>
                  <PageTab $w="66px" $active>Open</PageTab>
                  <PageTab $w="110px">My Activities</PageTab>
                  <PageTab $fill />
                  <PageTab>Deployment Close</PageTab>
                </PageTabs>
                <PageTabs $pl={14} $mt={9}>
                  <PageTab>Awaiting Client Response</PageTab>
                </PageTabs>
                <Panel>
                  <Actions>
                    <ActionButton $w={120}>Create Ticket</ActionButton>
                    <ActionButton $w={120}>New</ActionButton>
                    <FilterLabel>Name</FilterLabel>
                    <NoneSelect><Txt $ls={0.6}>--None--</Txt><Tri w={9} h={7} c="#999" /></NoneSelect>
                  </Actions>
                  <ListBar>
                    <BarText>Show</BarText>
                    <CountSelect $ml={3}>50<Tri w={6} h={6} c="#000" /></CountSelect>
                    <BarText>entries</BarText>
                    <BarText $push>Search:</BarText>
                    <BarSearch readOnly />
                  </ListBar>
                  <Grid>
                    <GridRow $h={36} $bg="#cecece" $bb={3}>
                      <Cell />
                      <Cell $p="8px 9px">Subject</Cell>
                      <Cell $flex $p="7px 8px"><span /><Sort /></Cell>
                      <Cell $flex $p="7px 8px">Deadline<Sort /></Cell>
                      <Cell $flex $p="7px 8px 7px 9px">Status(%Done)<Sort /></Cell>
                    </GridRow>
                    <GridRow $h={46} $bg="#cecece" $bb={3}>
                      <Cell />
                      <Cell $p="8px"><CellSearch $w={180}><span>Search Subject</span></CellSearch></Cell>
                      <Cell $p="8px"><CellSearch $w={93} /></Cell>
                      <Cell $p="8px"><CellSearch $w={77}><span>Search Deadline</span></CellSearch></Cell>
                      <Cell $p="8px"><CellSearch $w={108}><span>Search Status(%Done)</span></CellSearch></Cell>
                    </GridRow>
                    <GridRow $h={73} $bg="#ffbcbc">
                      <Cell><MailIcons><Mail /></MailIcons></Cell>
                      <Cell $color="#2f66a6">CRT on etoninstitute.com<br />for Ivanna by Joe</Cell>
                      <Cell />
                      <Cell>7/12/2019<br />5:00:00 AM</Cell>
                      <Cell>Open (70 %)</Cell>
                    </GridRow>
                    <GridRow $h={90}>
                      <Cell><MailIcons><Mail /></MailIcons></Cell>
                      <Cell $color="#2f66a6">Royal University for<br />Geographical Distance<br />Page</Cell>
                      <Cell />
                      <Cell>7/26/2019<br />6:14:19 PM</Cell>
                      <Cell>Done (100 %)</Cell>
                    </GridRow>
                  </Grid>
                </Panel>
              </Main>
            </PageBody>
          </Page>
          <Backdrop />

          <DialogLayer>
            <Dialog>
              <Editor>
                <EditorPath>
                  body
                  <svg width="10" height="10" viewBox="0 0 10 10"><path d="M10 0V10H0z" fill="#bcbcbc" /></svg>
                </EditorPath>
              </Editor>
              <AttachRow>
                <AttachButton><Clip /><Txt>Attachment</Txt></AttachButton>
                <CheckLine $p="0 16px 0 0"><OperatorText>Show To Operator</OperatorText><Check $m="-2px 0 0 5px" /></CheckLine>
              </AttachRow>
              <FormRow $h={47}>
                <Label>Deadline</Label><Input readOnly />
                <Star>ETA</Star><Input readOnly value="03:00" />
              </FormRow>
              <FormRow $h={63}>
                <Star>Priority</Star><Dropdown>Major</Dropdown>
                <Label>{"Reference\nTickets"}</Label><Input readOnly />
              </FormRow>
              <FormRow $h={47}>
                <Star>Company</Star><Dropdown>LiveAdmins</Dropdown>
                <Star>Departments</Star><Dropdown>IT Development Team</Dropdown>
              </FormRow>
              <FormRow $h={47}>
                <Label>Assign To User</Label><Dropdown>---Select One---</Dropdown>
                <Star>Type</Star><Dropdown error>--- Select one ---</Dropdown>
              </FormRow>
              <CheckLine $bold $h={47} $p="6px 0 0 1px">Send Email only to this user<Check $m="-1px 0 0 9px" /></CheckLine>
              <FormRow $h={47}>
                <Label>Follow-Up</Label><Input readOnly placeholder="Follow up date and time" />
                <Label>Notes</Label><Input readOnly placeholder="Follow up Notes" />
              </FormRow>
              <CheckLine $bold $h={73} $p="6px 0 0 1px">Send follow up Reminder Email<Check $m="-1px 0 0 9px" /></CheckLine>
              <LinkedPanel>
                <LinkedTabs>
                  <LinkedTab $w={85} $active>Websites</LinkedTab>
                  <LinkedTab $w={99}>Subscribers</LinkedTab>
                </LinkedTabs>
                <LinkedBody>
                  <ListBar>
                    <BarText>Show</BarText>
                    <CountSelect $ml={3}>10<Tri w={6} h={6} c="#000" /></CountSelect>
                    <BarText>entries</BarText>
                    <BarText $push>Websites:</BarText>
                    <BarSearch readOnly />
                  </ListBar>
                  <LinkedTable><LinkedCheckCell><Check $m="0" /></LinkedCheckCell></LinkedTable>
                </LinkedBody>
              </LinkedPanel>
            </Dialog>
          </DialogLayer>
          <StepBadge>1</StepBadge>
          <Toast><Shield /><Txt $ls={-0.36}>Please select ticket type</Txt></Toast>
        </PageArea>
        <Scrollbar>
          <Tri w={7} h={4} c="#505050" up />
          <Thumb />
          <Tri w={7} h={4} c="#505050" />
        </Scrollbar>
      </Viewport>

      <Taskbar>
        <StartButton>
          <svg width="16" height="16" viewBox="0 0 16 16" fill="#fff">
            <path d="M0 2.300L6.500 1.400V7.500H0zM7.300 1.300L16 0V7.500H7.300zM0 8.300H6.500V14.500L0 13.600zM7.300 8.300H16V16L7.300 14.700z" />
          </svg>
        </StartButton>
        <TaskSearch>
          <CortanaRing />
          <span>Type here to search</span>
          <svg width="12" height="16" viewBox="0 0 12 16" fill="none" stroke="#333" strokeWidth="1.200">
            <rect x="3.500" y=".6" width="5" height="10" rx="1.500" />
            <path d="M.6 8v3q0 2 2 2h6.800q2 0 2-2V8M6 13v3" />
          </svg>
        </TaskSearch>
        <TaskView>
          <svg width="17" height="16" viewBox="0 0 17 16" fill="none" stroke="#fff" strokeWidth="1.200">
            <path d="M.6 4.500h10v6.500H.6zM.6 0v2.500h10V0M.6 16v-3h10v3M15 0v4M15 9v7" />
            <path d="M13.500 5h3v3h-3z" fill="#fff" stroke="none" />
          </svg>
        </TaskView>
        {AppIcons.map((icon, i) => (
          <AppSlot key={i} $on={i === 6 ? "#3c4147" : i === 9 ? "#20262e" : ""}>{icon}</AppSlot>
        ))}
        <Tray>
          <TrayIcon $ml={0}>
            <svg width="15" height="15" viewBox="0 0 15 15" fill="none" stroke="#fff" strokeWidth="1.200">
              <circle cx="10.500" cy="3.300" r="2.600" /><circle cx="4.500" cy="7.500" r="2.300" />
              <path d="M.7 14q0-4 3.800-4t3.800 4M8.500 7.500q5-2 6 3" />
            </svg>
          </TrayIcon>
          <TrayIcon $ml={22}>
            <svg width="12" height="7" viewBox="0 0 12 7" fill="none" stroke="#fff" strokeWidth="1.400">
              <path d="M.5 6.500L6 1L11.500 6.500" />
            </svg>
          </TrayIcon>
          <TrayIcon $ml={13}>
            <svg width="13" height="13" viewBox="0 0 13 13" fill="none" stroke="#ccc" strokeWidth="1.200">
              <path d="M.6 12Q1 1.500 12.500 .8M3.500 12.500Q4 5 12.500 4M6.500 12.500Q7 8 12.500 7.300" />
              <circle cx="11" cy="11" r="1.800" fill="#fff" stroke="none" />
            </svg>
          </TrayIcon>
          <TrayIcon $ml={9}>
            <svg width="15" height="9" viewBox="0 0 15 9" fill="none" stroke="#fff" strokeWidth="1.200">
              <path d="M.6 .6h12v7.800H.6zM14.300 3v3" /><path d="M2.500 2.500h4v4h-4z" fill="#fff" stroke="none" />
            </svg>
          </TrayIcon>
          <TrayIcon $ml={8}>
            <svg width="17" height="13" viewBox="0 0 17 13" fill="none" stroke="#fff" strokeWidth="1.100">
              <path d="M.6 4.500H3L6.500 1V12L3 8.500H.6zM8.500 4.500q1.500 2 0 4" />
              <path d="M11 2.500q3.500 4 0 8M13.500 1q4.500 5.500 0 11" stroke="#777" />
            </svg>
          </TrayIcon>
          <TrayIcon $ml={10}><Txt $ls={-0.35}>ENG</Txt></TrayIcon>
          <Clock>5:27 PM<br />7/25/2019</Clock>
          <ActionCenter>
            <svg width="16" height="15" viewBox="0 0 16 15">
              <path d="M0 0H16V12H7L4 15V12H0z" fill="#fff" />
              <path d="M3 3.500h10M3 6h10M3 8.500h7" stroke="#060a12" />
            </svg>
            <ActionCount>2</ActionCount>
          </ActionCenter>
        </Tray>
      </Taskbar>
    </Screen>
  );
}
